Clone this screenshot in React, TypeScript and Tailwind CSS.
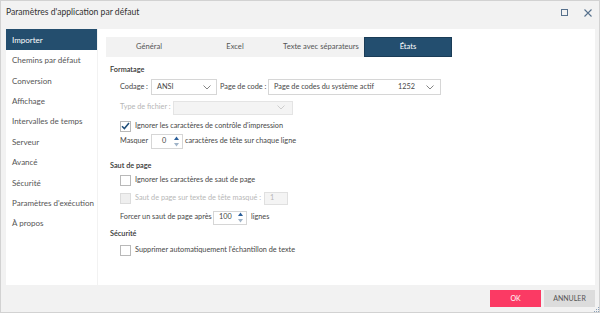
import React from "react";

const font = { fontFamily: 'Lato, "Open Sans", sans-serif' };

function Chevron({ color = "#777" }: { color?: string }) {
  return (
    <svg width="8" height="5" viewBox="0 0 8 5" className="shrink-0">
      <path d="M0.5 0.5 L4 4 L7.5 0.5" fill="none" stroke={color} strokeWidth="0.9" />
    </svg>
  );
}

function Spin() {
  return (
    <svg width="5" height="11" viewBox="0 0 5 11" className="shrink-0">
      <path d="M0 4 L2.5 0.5 L5 4 Z" fill="#2b5f9a" />
      <path d="M0 7 L2.5 10.5 L5 7 Z" fill="#9fb3c8" />
    </svg>
  );
}

function Check({ checked = false, disabled = false }: { checked?: boolean; disabled?: boolean }) {
  return (
    <div
      className={`w-[11px] h-[11px] border shrink-0 flex items-center justify-center ${
        disabled ? "border-[#dcdcdc] bg-[#efefef]" : "border-[#b9b9b9] bg-white"
      }`}
    >
      {checked && (
        <svg width="9" height="8" viewBox="0 0 9 8">
          <path d="M1 4.2 L3.4 6.6 L8 1" fill="none" stroke="#1f4e79" strokeWidth="1.5" />
        </svg>
      )}
    </div>
  );
}

const navItems = [
  "Importer",
  "Chemins par défaut",
  "Conversion",
  "Affichage",
  "Intervalles de temps",
  "Serveur",
  "Avancé",
  "Sécurité",
  "Paramètres d'exécution",
  "À propos",
];

const tabs = ["Général", "Excel", "Texte avec séparateurs", "États"];

export default function App() {
  return (
    <div
      style={font}
      className="w-[600px] h-[313px] bg-[#f2f2f2] border border-[#d2d2d2] flex flex-col text-[7.3px] text-[#474747] overflow-hidden"
    >
      {/* title bar */}
      <div className="h-[28px] shrink-0 flex items-center pl-[5px] pr-[7px]">
        <div className="text-[8.6px] text-[#333] -mt-[5px]">Paramètres d'application par défaut</div>
        <div className="ml-auto flex items-center gap-[16px] -mt-[5px]">
          <div className="w-[7px] h-[7px] border-[1.3px] border-[#56708c]" />
          <svg width="8" height="8" viewBox="0 0 8 8">
            <path d="M0.5 0.5 L7.5 7.5 M7.5 0.5 L0.5 7.5" stroke="#56708c" strokeWidth="1.1" />
          </svg>
        </div>
      </div>

      {/* body */}
      <div className="flex h-[256px] shrink-0 pl-[5px] pr-[4px]">
        <div className="w-[91px] bg-white flex flex-col text-[8px]">
          {navItems.map((n, i) => (
            <div
              key={n}
              className={`shrink-0 flex items-center pl-[6px] whitespace-nowrap ${
                i === 0 ? "bg-[#244e6e] text-white h-[21px]" : "text-[#555] h-[20.4px]"
              }`}
            >
              {n}
            </div>
          ))}
        </div>
        <div className="w-px bg-[#f2f2f2]" />
        <div className="flex-1 bg-white flex flex-col pt-[8px] pl-[8px]">
          <div className="flex h-[20px] w-[346px] bg-[#f2f2f2] shrink-0 text-[7.6px]">
            {tabs.map((t, i) => (
              <div
                key={t}
                className={`flex-1 flex items-center justify-center whitespace-nowrap ${
                  i === 3 ? "bg-[#234e6f] text-white border border-[#1a3c57]" : "text-[#555]"
                }`}
              >
                {t}
              </div>
            ))}
          </div>

          <div className="pl-[4px] flex flex-col">
            <div className="mt-[6px] h-[14px] flex items-center font-semibold text-[#333]">Formatage</div>
            <div className="pl-[10px] flex flex-col">
              <div className="mt-[2px] h-[16px] flex items-center">
                <div className="w-[31px] whitespace-nowrap">Codage :</div>
                <div className="w-[66px] h-[16px] border border-[#d6d6d6] flex items-center pl-[5px] pr-[5px]">
                  <span className="flex-1">ANSI</span>
                  <Chevron />
                </div>
                <div className="ml-[3px] w-[48px] whitespace-nowrap">Page de code :</div>
                <div className="w-[173px] h-[16px] border border-[#d6d6d6] flex items-center pl-[5px] pr-[6px]">
                  <span className="flex-1 whitespace-nowrap">Page de codes du système actif</span>
                  <span className="mr-[11px]">1252</span>
                  <Chevron />
                </div>
              </div>
              <div className="mt-[5px] h-[15px] flex items-center text-[#b5b5b5]">
                <div className="w-[53px] whitespace-nowrap">Type de fichier :</div>
                <div className="w-[120px] h-[14px] border border-[#e4e4e4] bg-[#f4f4f4] flex items-center justify-end pr-[7px]">
                  <Chevron color="#c8c8c8" />
                </div>
              </div>
              <div className="mt-[4px] h-[14px] flex items-center">
                <Check checked />
                <span className="ml-[4px] whitespace-nowrap">Ignorer les caractères de contrôle d'impression</span>
              </div>
              <div className="mt-[1px] h-[15px] flex items-center">
                <div className="w-[31px]">Masquer</div>
                <div className="w-[32px] h-[15px] border border-[#d6d6d6] flex items-center pl-[10px] pr-[3px]">
                  <span className="flex-1">0</span>
                  <Spin />
                </div>
                <span className="ml-[2px] whitespace-nowrap">caractères de tête sur chaque ligne</span>
              </div>
            </div>

            <div className="mt-[10px] h-[14px] flex items-center font-semibold text-[#333]">Saut de page</div>
            <div className="pl-[10px] flex flex-col">
              <div className="h-[15px] flex items-center">
                <Check />
                <span className="ml-[4px] whitespace-nowrap">Ignorer les caractères de saut de page</span>
              </div>
              <div className="mt-[3px] h-[15px] flex items-center text-[#b8b8b8]">
                <Check disabled />
                <span className="ml-[4px] w-[129px] whitespace-nowrap">Saut de page sur texte de tête masqué :</span>
                <div className="w-[24px] h-[13px] border border-[#e0e0e0] bg-[#f4f4f4] flex items-center pl-[5px]">1</div>
              </div>
              <div className="mt-[4px] h-[15px] flex items-center">
                <div className="w-[93px] whitespace-nowrap">Forcer un saut de page après</div>
                <div className="w-[34px] h-[14px] border border-[#d6d6d6] flex items-center pl-[5px] pr-[3px]">
                  <span className="flex-1">100</span>
                  <Spin />
                </div>
                <span className="ml-[4px]">lignes</span>
              </div>
            </div>

            <div className="mt-[2px] h-[14px] flex items-center font-semibold text-[#333]">Sécurité</div>
            <div className="pl-[10px] flex flex-col">
              <div className="mt-[2px] h-[15px] flex items-center">
                <Check />
                <span className="ml-[4px] whitespace-nowrap">Supprimer automatiquement l'échantillon de texte</span>
              </div>
            </div>
          </div>
        </div>
      </div>

      {/* footer */}
      <div className="flex-1 flex items-start justify-end pt-[5px] pr-[4px] relative">
        <div className="w-[51px] h-[17px] bg-[#fb3a64] text-white text-[7px] flex items-center justify-center">OK</div>
        <div className="ml-[3px] w-[51px] h-[17px] bg-[#dcdcdc] text-[#555] text-[7px] flex items-center justify-center">
          ANNULER
        </div>
        <svg width="5" height="5" viewBox="0 0 5 5" className="absolute right-0 bottom-0">
          <rect x="4" y="0" width="1" height="1" fill="#8aa0b8" />
          <rect x="2" y="2" width="1" height="1" fill="#8aa0b8" />
          <rect x="4" y="2" width="1" height="1" fill="#8aa0b8" />
          <rect x="0" y="4" width="1" height="1" fill="#8aa0b8" />
          <rect x="2" y="4" width="1" height="1" fill="#8aa0b8" />
          <rect x="4" y="4" width="1" height="1" fill="#8aa0b8" />
        </svg>
      </div>
    </div>
  );
}
